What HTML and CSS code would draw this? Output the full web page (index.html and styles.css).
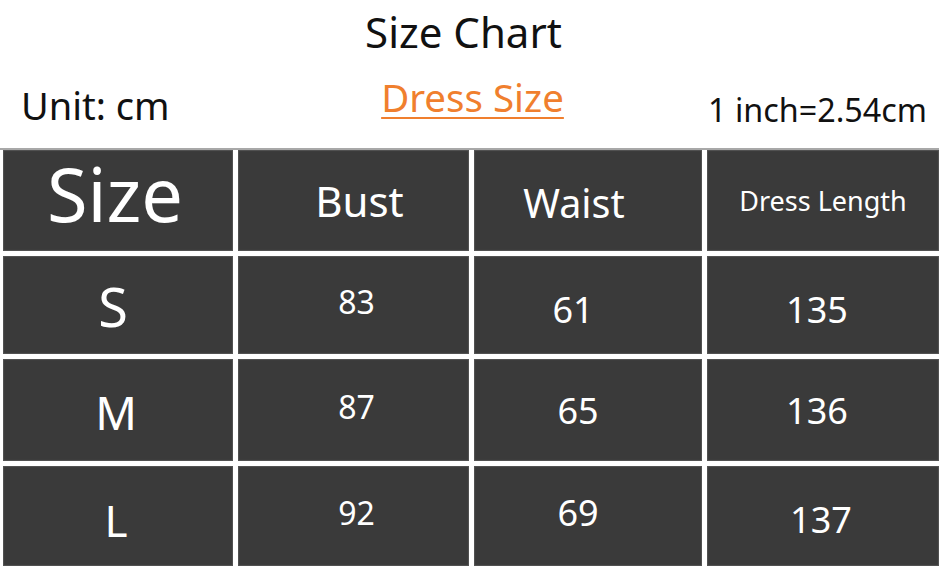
FILE: index.html
```html
<!DOCTYPE html>
<html lang="en">
<head>
<meta charset="utf-8">
<title>Size Chart</title>
<link rel="stylesheet" href="styles.css">
</head>
<body>
<div class="page">
  <header class="head">
    <h1 class="title">Size Chart</h1>
    <div class="subhead">
      <span class="unit">Unit: cm</span>
      <span class="kind">Dress Size</span>
      <span class="conv">1 inch=2.54cm</span>
    </div>
  </header>
  <div class="chart">
    <div class="cell c1 h"><span class="t-size">Size</span></div>
    <div class="cell c2 h"><span class="t-bust">Bust</span></div>
    <div class="cell c3 h"><span class="t-waist">Waist</span></div>
    <div class="cell c4 h"><span class="t-len">Dress Length</span></div>

    <div class="cell c1"><span class="t-s">S</span></div>
    <div class="cell c2"><span class="v2 up">83</span></div>
    <div class="cell c3"><span class="v3 r1">61</span></div>
    <div class="cell c4"><span class="v4 r1">135</span></div>

    <div class="cell c1"><span class="t-m">M</span></div>
    <div class="cell c2"><span class="v2 up">87</span></div>
    <div class="cell c3"><span class="v3">65</span></div>
    <div class="cell c4"><span class="v4">136</span></div>

    <div class="cell c1"><span class="t-l">L</span></div>
    <div class="cell c2"><span class="v2 up">92</span></div>
    <div class="cell c3"><span class="v3 r3">69</span></div>
    <div class="cell c4"><span class="v4 low">137</span></div>
  </div>
</div>
</body>
</html>
```
FILE: styles.css
```css
* { box-sizing: border-box; }
html, body { margin: 0; padding: 0; background: #ffffff; }
body {
  font-family: "Noto Sans", "Open Sans", sans-serif;
  color: #111111;
  width: 939px;
  height: 567px;
  overflow: hidden;
}
.head { height: 148px; }
.title {
  margin: 0;
  height: 63px;
  font-size: 42px;
  font-weight: 400;
  line-height: 63px;
  text-align: center;
  padding-right: 12px;
}
.subhead {
  height: 85px;
  display: grid;
  grid-template-columns: 1fr 1fr 1fr;
  align-items: start;
}
.unit {
  font-size: 38px;
  line-height: 85px;
  padding-left: 21px;
}
.kind {
  font-size: 38.5px;
  line-height: 68px;
  color: #f07f2e;
  text-decoration: underline;
  text-decoration-thickness: 2px;
  text-underline-offset: 5px;
  justify-self: center;
  margin-left: 6px;
}
.conv {
  font-size: 32.3px;
  line-height: 92px;
  justify-self: end;
  padding-right: 12px;
}
.chart {
  display: grid;
  grid-template-columns: 230px 231px 228px 232px;
  grid-template-rows: 101px 98px 102px 100px;
  column-gap: 5px;
  row-gap: 5px;
  padding-left: 3px;
  border-top: 2px solid #a8a8a8;
  background: #ffffff;
}
.cell {
  background: #3a3a3a;
  color: #ffffff;
  display: flex;
  align-items: center;
  justify-content: center;
  box-shadow: inset 0 0 1px 1px #555;
}
.cell span { line-height: 1; }
.t-size { font-size: 74px; margin-right: 6px; margin-top: -14px; }
.t-bust { font-size: 42px; margin-left: 12px; }
.t-waist { font-size: 39.5px; margin-left: -28px; margin-top: 6px; }
.t-len { font-size: 27px; }
.t-s { font-size: 54px; margin-right: 10px; margin-top: 2px; }
.t-m { font-size: 46px; margin-right: 4px; margin-top: 4px; }
.t-l { font-size: 44px; margin-right: 4px; margin-top: 8px; }
.v2 { font-size: 32px; margin-left: 6px; }
.v2.up { margin-top: -6px; }
.v3 { font-size: 36px; margin-left: -20px; margin-top: 2px; }
.v3.r1 { margin-left: -30px; margin-top: 10px; }
.v3.r3 { margin-top: -6px; }
.v4 { font-size: 36px; margin-right: 12px; margin-top: 2px; }
.v4.r1 { margin-right: 12px; margin-top: 10px; }
.v4.low { margin-top: 8px; margin-right: 4px; }
```
